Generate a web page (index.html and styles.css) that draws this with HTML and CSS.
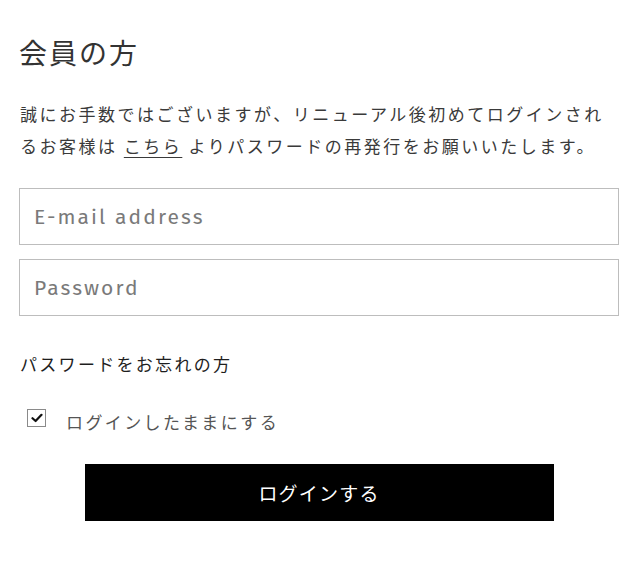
FILE: index.html
```html
<!DOCTYPE html>
<html lang="ja">
<head>
<meta charset="utf-8">
<link rel="stylesheet" href="styles.css">
</head>
<body>
<div class="login">
  <h2 class="login-title">会員の方</h2>
  <p class="login-note">誠にお手数ではございますが、リニューアル後初めてログインされ<br>るお客様は <a class="note-link" href="#">こちら</a> よりパスワードの再発行をお願いいたします。</p>
  <form class="login-form">
    <input class="field" type="text" placeholder="E-mail address">
    <input class="field" type="password" placeholder="Password">
    <a class="forgot" href="#">パスワードをお忘れの方</a>
    <label class="remember">
      <span class="checkbox"><svg viewBox="0 0 12 10" width="12" height="10"><path d="M1.5 5.2 L4.6 8 L10.5 1.8" fill="none" stroke="#111" stroke-width="2.2" stroke-linecap="round" stroke-linejoin="round"/></svg></span>
      <span class="remember-text">ログインしたままにする</span>
    </label>
    <button class="submit" type="button">ログインする</button>
  </form>
</div>
</body>
</html>
```
FILE: styles.css
```css
html, body {
  margin: 0;
  padding: 0;
  background: #fff;
}
body {
  font-family: "Noto Sans CJK JP", "Noto Sans", sans-serif;
  color: #333;
}
.login {
  width: 600px;
  margin-left: 19px;
  padding-top: 30px;
}
.login-title {
  margin: 0;
  font-size: 28px;
  font-weight: 400;
  line-height: 44px;
  color: #333;
  letter-spacing: 2px;
}
.login-note {
  margin: 24px 0 0 1px;
  font-size: 17px;
  line-height: 32px;
  letter-spacing: 2.5px;
  color: #3a3a3a;
}
.note-link {
  color: #3a3a3a;
  text-decoration: underline;
  text-underline-offset: 4px;
  text-decoration-thickness: 1px;
}
.login-form {
  display: flex;
  flex-direction: column;
  margin-top: 26px;
}
.field {
  box-sizing: border-box;
  width: 600px;
  height: 57px;
  border: 1px solid #bdbdbd;
  border-radius: 0;
  padding: 0 14px;
  font-family: "Fira Sans", "Noto Sans", "Open Sans", sans-serif;
  font-size: 21px;
  letter-spacing: 2.1px;
  color: #333;
  outline: none;
  margin: 0 0 14px 0;
}
.field::placeholder {
  color: #7a7a7a;
}
.forgot {
  margin-top: 21px;
  font-size: 17px;
  line-height: 26px;
  letter-spacing: 2.3px;
  color: #1e1e1e;
  text-decoration: none;
  align-self: flex-start;
  padding-left: 1px;
}
.remember {
  display: flex;
  align-items: center;
  margin-top: 28px;
  padding-left: 8px;
}
.checkbox {
  box-sizing: border-box;
  width: 19px;
  height: 18px;
  border: 1px solid #8a8a8a;
  display: flex;
  align-items: center;
  justify-content: center;
}
.remember-text {
  margin-left: 20px;
  font-size: 17px;
  line-height: 26px;
  letter-spacing: 2.4px;
  color: #555;
  position: relative;
  top: 4px;
}
.submit {
  align-self: center;
  margin-top: 33px;
  width: 469px;
  height: 57px;
  background: #000;
  border: 0;
  color: #fff;
  font-family: "Noto Sans CJK JP", sans-serif;
  font-size: 19px;
  letter-spacing: 1.2px;
  cursor: pointer;
}
```
